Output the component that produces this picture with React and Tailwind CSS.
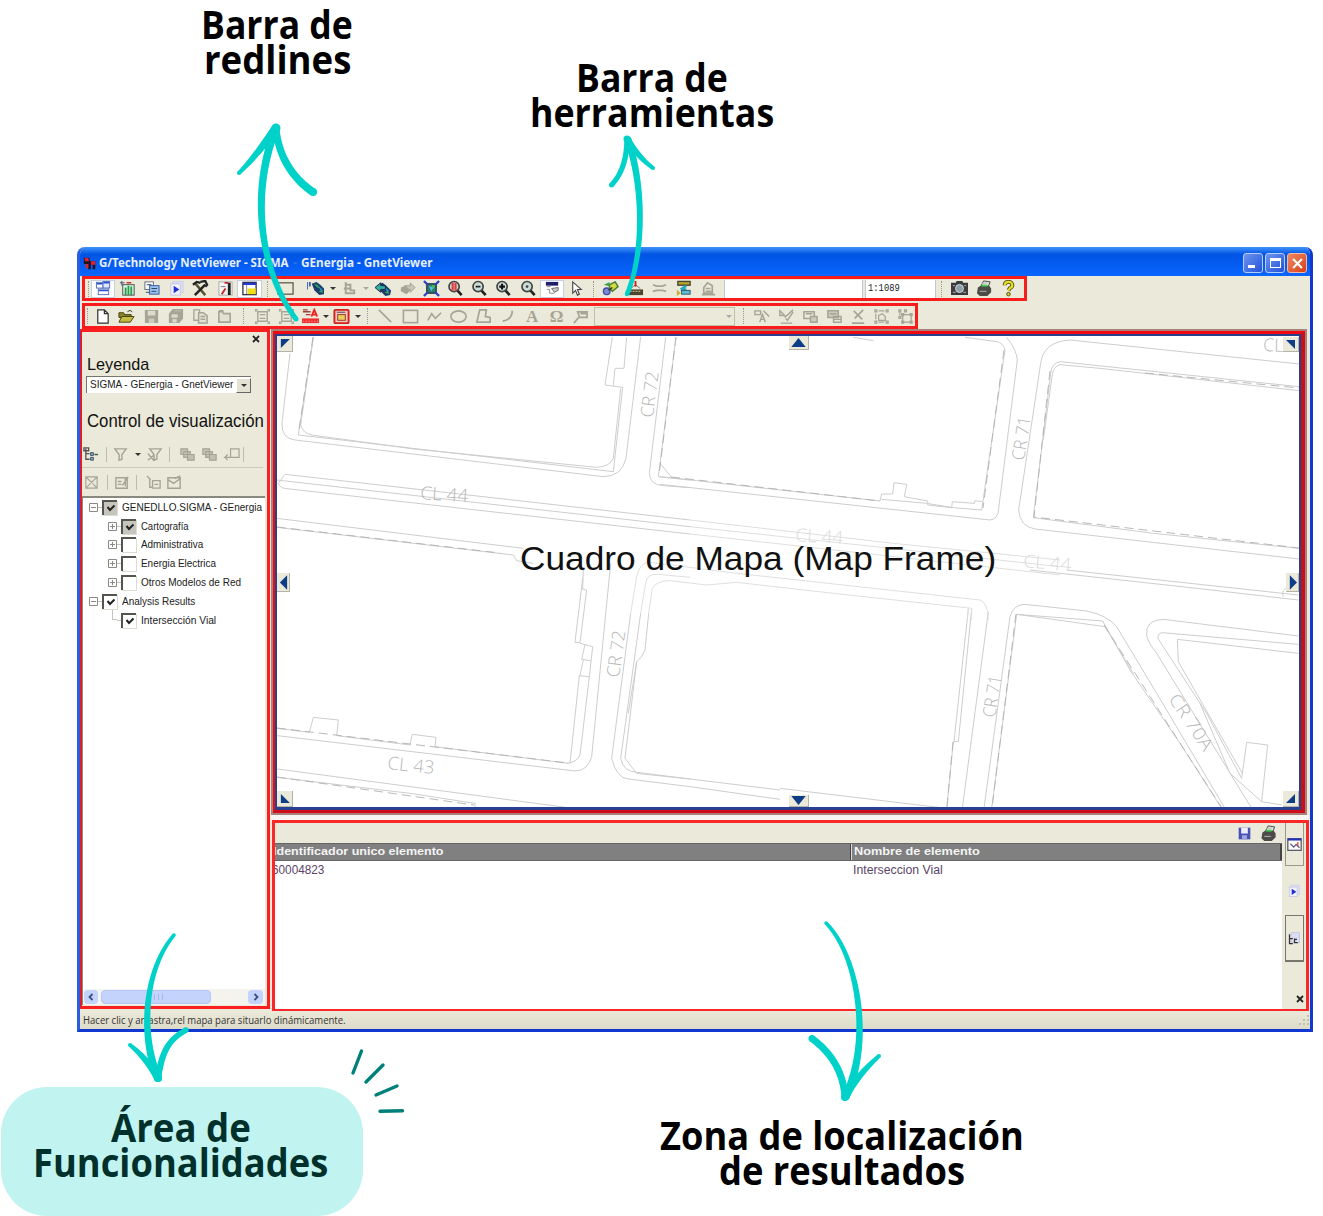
import React, { useLayoutEffect, useRef, useState } from "react";

/* One line of text stretched or condensed to the width of its box. */
function Fit({ className = "", children }) {
  const box = useRef(null);
  const txt = useRef(null);
  const [s, setS] = useState(1);
  useLayoutEffect(() => {
    setS(box.current.clientWidth / txt.current.offsetWidth);
  }, [children]);
  return (
    <div ref={box} className={`shrink-0 whitespace-pre ${className}`}>
      <span ref={txt} className="inline-block origin-left" style={{ transform: `scaleX(${s})` }}>
        {children}
      </span>
    </div>
  );
}

const G = "#a5a495";
const K = "#333";

const globe = (
  <>
    <path d="M1 4l5-2 4 3 5 5-1 5-5 1-5-5z" fill="#1d3c6e" />
    <path d="M3 4l4 1 3 4-3-1z" fill="#2fae57" />
    <path d="M8 6l5 5-2 1z" fill="#2a9ad6" />
    <path d="M8 12l4-1 1 3z" fill="#3aa650" />
  </>
);
const lens = (mark) => (
  <>
    <path d="M11 11l4.5 5" stroke="#222" strokeWidth="2.8" />
    <circle cx="7.5" cy="7" r="5.4" fill="#c9dcd6" stroke="#444" strokeWidth="1.8" />
    {mark}
  </>
);
const printer = (
  <>
    <path d="M5 7l3-6 7 1-2 5z" fill="#dfe6dc" stroke="#444" />
    <path d="M2 8l3-2h9l2 3v4l-4 4H4l-3-3z" fill="#4b4c48" />
    <path d="M4 12h7M6 3.5h6" stroke="#bbb" />
    <path d="M6 6h6" stroke="#38d048" strokeWidth="2" />
  </>
);

const ICONS = {
  windows: <><rect x="1.5" y="2.5" width="7" height="6" fill="#fff" stroke="#5572b8" /><rect x="8.5" y="1.5" width="7" height="7" fill="#dfe8ff" stroke="#4a66c0" /><rect x="3.5" y="9.5" width="11" height="6" fill="#fff" stroke="#5572b8" /><path d="M9 3h6M4 11h10M2 4h6" stroke="#2c50d0" strokeWidth="1.6" /></>,
  grid: <><rect x="4" y="5" width="12" height="11" fill="#dfe" stroke="#444" /><path d="M7 8v8M10 6v10M13 7v9" stroke="#2e9a48" strokeWidth="2" /><path d="M1 3h5M3 1v5" stroke="#447" /><path d="M8 3h5" stroke="#d03030" strokeWidth="1.6" /></>,
  copyview: <><rect x="2" y="2" width="9" height="8" fill="#fff" stroke="#667" /><rect x="7" y="6" width="10" height="9" fill="#9cc0ec" stroke="#3458a8" /><path d="M9 9h6M4 5h5M3 13h4M9 12h5" stroke="#246" /></>,
  page: <><rect x="5" y="1.5" width="11" height="12" fill="#dedef2" stroke="#cfcfe6" /><rect x="3" y="4" width="10" height="12" fill="#f2f2ff" stroke="#c4c4e4" /><path d="M6 6l6 4-6 4z" fill="#1f2fd0" /></>,
  hammer: <><path d="M3 3l11 13" stroke="#5a5036" strokeWidth="2.6" /><path d="M14 5L3 16" stroke="#222" strokeWidth="2.6" /><path d="M1 5l4-3 4 1M9 2l5-1 2 4-2 2" fill="none" stroke="#222" strokeWidth="2.4" /></>,
  chart: <><rect x="2" y="2" width="14" height="14" fill="#f4f4f0" stroke="#aaa" /><path d="M13 3v13" stroke="#222" strokeWidth="3" /><path d="M5 15l4-6M8 3h4" stroke="#c02828" strokeWidth="2" /><path d="M4 7h5" stroke="#777" /></>,
  panel: <><rect x="2" y="2.5" width="14" height="13" fill="#fff" stroke="#334" strokeWidth="1.4" /><path d="M2 4h14" stroke="#2438d0" strokeWidth="2.4" /><rect x="7" y="9" width="8.500" height="6" fill="#f0e010" /><path d="M6 5v10" stroke="#889" /></>,
  rect: <rect x="1" y="3" width="16" height="12" fill="none" stroke="#55564c" strokeWidth="1.3" />,
  layersGlobe: <><path d="M0 2v8M3 2v5" stroke="#4668b0" strokeWidth="2" /><g transform="translate(4 0)">{globe}</g></>,
  tool1: <><path d="M5 2v12h9M5 5h5v6h4v4M3 9h7" fill="none" stroke={G} strokeWidth="2" /></>,
  back: <><g transform="translate(2 1)">{globe}</g><path d="M0 8l6-5v3h5v4H6v3z" fill="#2fb0a0" stroke="#224" /></>,
  fwd: <><path d="M17 8l-5-5v3H6v4h6v3z" fill="#c6c5b6" stroke={G} /><path d="M2 8l5-2 5 5-4 4-6-3z" fill={G} /></>,
  extent: <><rect x="4" y="4" width="10" height="10" fill="#2a7a6a" stroke="#113" /><path d="M6 6l5 2-2 4z" fill="#53c0f0" /><path d="M9 5l4 1-2 4z" fill="#4cc050" /><path d="M1 1l4 4M17 1l-4 4M1 17l4-4M17 17l-4-4" stroke="#2e40c0" strokeWidth="2.4" /></>,
  zRed: lens(<><path d="M6 3v8M9 3v8" stroke="#e04040" strokeWidth="2.4" /></>),
  zOut: lens(<path d="M5 7h5" stroke="#222" strokeWidth="1.8" />),
  zIn: lens(<path d="M4.500 7h6M7.500 4v6" stroke="#111" strokeWidth="2.200" />),
  zDot: lens(<circle cx="7.500" cy="7" r="1.400" fill="#444" />),
  hand: <><path d="M2 2h13v4H2z" fill="#20206a" /><path d="M3 7h4M3 10h3v4h5" stroke="#888" fill="none" /><path d="M8 9l7-1v3l-4 2z" fill="#ccc" stroke="#666" /></>,
  cursor: <path d="M5 2v12l3-3 2 5 2-1-2-5h4z" fill="#fff" stroke="#444" strokeWidth="1.200" />,
  link: <><circle cx="5" cy="12" r="3.500" fill="#7a8ad8" stroke="#3c4ca8" strokeWidth="1.400" /><path d="M8 5l6-3 3 5-6 5-3-3z" fill="#d8d840" stroke="#447a30" strokeWidth="1.500" /><path d="M2 5l6-3v5z" fill="#44a050" /><path d="M7 11l4-3" stroke="#333" strokeWidth="1.500" /></>,
  survey: <><rect x="1" y="10" width="16" height="6" fill="#4a4430" /><path d="M3 12h12" stroke="#d8d090" strokeDasharray="2 1" /><path d="M4 9l5-4 5 4" stroke="#776" fill="none" /><path d="M9 1v6" stroke="#d02020" strokeWidth="2" /></>,
  approx: <path d="M2 5l4 1.500h6L16 5M2 12l4-1h6l4 1" fill="none" stroke={G} strokeWidth="1.900" />,
  flow: <><rect x="3" y="1.500" width="13" height="4" fill="#b8a428" stroke="#443" strokeWidth="1.400" /><path d="M12 6L6 10M6 10h6" stroke="#20a8c0" strokeWidth="2.600" /><rect x="7" y="11" width="9" height="4" fill="#5ac0d8" stroke="#356" /><path d="M2 10l4 4-4 3z" fill="#c8b030" /></>,
  stamp: <><path d="M4 14V8l4-5 5 3v8z" fill="none" stroke={G} strokeWidth="1.800" /><path d="M2 15.500h14M6 9h5M6 12h6" stroke={G} strokeWidth="1.800" /></>,
  camera: <><path d="M0 3h5l1-2h6l1 2h5v13H0z" fill="#3b3b40" /><circle cx="9" cy="9" r="4.200" fill="#8ea0a8" stroke="#ddd" /><path d="M2 6h2M14 6h2M2 13h3M13 13h3" stroke="#bbb" /></>,
  printer,
  help: <><path d="M5 5.500a4 3.500 0 1 1 5.500 3.200L9 11" fill="none" stroke="#55501a" strokeWidth="4.200" /><path d="M5 5.500a4 3.500 0 1 1 5.500 3.200L9 11" fill="none" stroke="#e8e020" strokeWidth="2.200" /><circle cx="9" cy="15" r="1.900" fill="#d0c820" stroke="#55501a" /></>,
  doc: <path d="M4 2h7l4 4v10H4zM11 2v4h4" fill="#fff" stroke={K} strokeWidth="1.300" />,
  open: <><path d="M1 5h5l1 2h7v3H1z" fill="#8a8420" stroke="#444010" /><path d="M1 15l3-6h13l-4 6z" fill="#c4bc40" stroke="#444010" /><path d="M10 4q3-3 5 0" fill="none" stroke={K} /></>,
  save: <><path d="M2 2h14v14H2z" fill={G} /><path d="M5 3h8v5H5z" fill="#dddccc" /><path d="M6 11h6v5H6z" fill="#cccbbb" /></>,
  saveall: <><path d="M6 1h11v10l-4 5H2V6z" fill={G} /><path d="M5 7h6v3H5zM6 12h4v3H6zM8 3h7" fill="#dddccc" stroke="#dddccc" strokeWidth=".5" /></>,
  copy: <><path d="M2 2h6v11H2z" fill="none" stroke={G} strokeWidth="1.400" /><path d="M7 5h5l4 3v8H7zM9 9h5M9 12h5" fill="#e3e2d2" stroke={G} strokeWidth="1.600" /></>,
  folder: <path d="M3 4h4l1 2h7v9H3zM4 4V3h4" fill="#e3e2d2" stroke={G} strokeWidth="1.700" />,
  group: <><path d="M4 4h10v10H4zM1 2h3M14 2h3M1 16h3M14 16h3M2 1v3M16 1v3M2 14v3M16 14v3M6 7h6M6 11h6" fill="none" stroke={G} strokeWidth="1.500" /></>,
  redtext: <><path d="M1 4h8M1 2h5M4 7h5" stroke="#a04040" strokeWidth="1.500" /><path d="M10 9l3-7 3 7M11 7h4" fill="none" stroke="#f02020" strokeWidth="2" /><path d="M0 13.500h18" stroke="#f03030" strokeWidth="5" /><path d="M1 14h16" stroke="#fbb" strokeDasharray="1 2" /></>,
  redbox: <><rect x="1.500" y="2" width="15" height="14" rx="1" fill="#f4c8b8" stroke="#d02020" strokeWidth="2" /><rect x="5" y="7" width="8" height="6" fill="#e8d060" stroke="#a03020" /><path d="M4 4.500h9" stroke="#446" /></>,
  line: <path d="M2 2l13 13" stroke={G} strokeWidth="1.700" />,
  square: <rect x="1.500" y="2.500" width="15" height="13" fill="none" stroke={G} strokeWidth="1.700" />,
  zig: <path d="M2 13l4-7 4 5 6-6" fill="none" stroke={G} strokeWidth="1.700" />,
  ellipse: <ellipse cx="9" cy="9" rx="8.100" ry="6" fill="none" stroke={G} strokeWidth="1.700" />,
  poly: <path d="M5 2h7l-1 7 5 1v5H2z" fill="none" stroke={G} strokeWidth="1.800" />,
  arc: <path d="M14 3q0 9-10 11" fill="none" stroke={G} strokeWidth="1.900" />,
  callout: <path d="M2 16l5-6M6 4h10v6H8z M9 6h6" fill="none" stroke={G} strokeWidth="1.800" />,
  mA: <path d="M1 3h6v4H1zM6 15l3-8 3 8M7 12h4M10 3l6 6" fill="none" stroke={G} strokeWidth="1.500" />,
  mEdit: <path d="M2 3l5 5H2zM7 10l9-8M3 16h12M8 11l2 2 6-9" fill="none" stroke={G} strokeWidth="1.500" />,
  mBack: <><path d="M2 4h11v7H2z M4 6h7" fill="none" stroke={G} strokeWidth="1.600" /><path d="M9 9h7v6H9z" fill="#cccbbb" stroke={G} strokeWidth="1.500" /></>,
  mFront: <><path d="M2 3h11v7H2z M4 6h7" fill="#cccbbb" stroke={G} strokeWidth="1.600" /><path d="M8 9h8v6H8zM8 12h8" fill="none" stroke={G} strokeWidth="1.500" /></>,
  mDel: <path d="M4 3l9 9M14 2L5 11M2 16h13" fill="none" stroke={G} strokeWidth="1.700" />,
  mSel: <path d="M2 2h2v2H2zM14 2h2v2h-2zM2 14h2v2H2zM14 14h2v2h-2zM6 3h6M6 15h6M3 6v6M6 8l4-2 3 3v4H6z" fill="none" stroke={G} strokeWidth="1.300" />,
  mSel2: <path d="M2 2h2v2H2zM8 2h2v2H8zM2 9h2v2H2zM6 7h9v8H6zM5 6h2v2H5zM14 6h2v2h-2zM14 14h2v2h-2zM5 14h2v2H5zM3 5v3" fill="none" stroke={G} strokeWidth="1.300" />,
  tree: <><path d="M3 3v11h4M3 8h4M1 2h5v3H1z" fill="none" stroke="#555" strokeWidth="1.400" /><path d="M8 7h3v3H8zM8 12h3v3H8z" fill="#7aa8d0" stroke="#456" /><path d="M12 9h4" stroke="#464" strokeWidth="1.500" /></>,
  filter: <path d="M3 3h12l-4.500 6v5l-3 1V9z" fill="none" stroke={G} strokeWidth="1.500" />,
  filterX: <path d="M4 3h12l-4.500 6v5l-3 1V9zM2 8l6 7M9 9l-7 6" fill="none" stroke={G} strokeWidth="1.500" />,
  stack: <><path d="M2 3h7v6H2zM5 6h7v6H5z" fill="#c6c5b5" stroke={G} strokeWidth="1.300" /><path d="M9 9h7v6H9z" fill="#c0bfb0" stroke={G} strokeWidth="1.300" /></>,
  undo: <path d="M8 3h9v9H8zM10 12H2l3-3M2 12l3 3" fill="none" stroke={G} strokeWidth="1.300" />,
  boxX: <path d="M3 3h12v12H3zM3 3l6 6 6-6M3 15l5-5M15 15l-5-5" fill="none" stroke={G} strokeWidth="1.200" />,
  props: <path d="M2 4h12v11H2zM4 8h4M4 11h4M9 12l6-9M12 4v9" fill="none" stroke={G} strokeWidth="1.500" />,
  legend: <path d="M2 2l4 4M5 5v9h3M8 7h8v8H8zM10 11h4" fill="none" stroke={G} strokeWidth="1.400" />,
  env: <path d="M2 4h13v11H2zM2 6l6 4 7-5M9 5l6-3" fill="none" stroke={G} strokeWidth="1.500" />,
  disk: <><path d="M2 2h14v14H2z" fill="#4653b4" /><path d="M5 2h8v7H5z" fill="#eef" /><path d="M6 11h6v5H6z" fill="#9ba4dc" /></>,
  picture: <><rect x="1" y="2" width="16" height="14" fill="#fff" stroke="#556" strokeWidth="1.500" /><path d="M1 3h16" stroke="#2030c0" strokeWidth="2.500" /><path d="M4 8l4 4 3-3 4 4" fill="none" stroke="#668" strokeWidth="1.600" /><path d="M13 6v5" stroke="#e04040" strokeWidth="1.500" /></>,
  rpage: <><rect x="5" y="2" width="10" height="12" fill="#dcdcf4" stroke="#c4c4e4" /><path d="M3 4v11h4M3 9h4M9 9v5h4M9 10h3" fill="none" stroke="#333" strokeWidth="1.500" /></>,
};

function Icon({ name, className = "h-[18px] w-[18px]" }) {
  return (
    <svg viewBox="0 0 18 18" className={`shrink-0 ${className}`}>
      {ICONS[name]}
    </svg>
  );
}

const Slot = ({ name, on, w = "w-[24.4px]" }) => (
  <div className={`flex h-[18px] shrink-0 items-center justify-center ${w} ${on ? "bg-white outline outline-[#c5cfe0] -outline-offset-1" : ""}`}>
    {name === "A" || name === "Ω" ? (
      <span className="font-['Liberation_Serif',serif] text-[17px] leading-none font-bold text-[#a5a495]">{name}</span>
    ) : (
      <Icon name={name} className="h-[17px] w-[17px]" />
    )}
  </div>
);
const Slots = ({ names, on = [], w }) => names.map((n, i) => <Slot key={i} name={n} on={on.includes(n)} w={w} />);

const Grip = ({ w }) => (
  <div className={`flex shrink-0 justify-center ${w}`}>
    <div className="h-[16px] w-0 border-l border-dotted border-[#99988a]" />
  </div>
);
const Drop = ({ w, c = "border-t-[#333]" }) => (
  <div className={`flex shrink-0 justify-center ${w}`}>
    <div className={`h-0 w-0 border-x-[3px] border-t-[3px] border-x-transparent ${c}`} />
  </div>
);
const Sep = ({ w }) => (
  <div className={`flex shrink-0 justify-center ${w}`}>
    <div className="h-[15px] w-px bg-[#bdbcae]" />
  </div>
);

function Callout({ className = "", lines }) {
  return (
    <div className={`flex flex-col items-center font-['Open_Sans',sans-serif] text-[40px] leading-[35px] font-bold ${className}`}>
      {lines.map(([t, w]) => (
        <Fit key={t} className={w}>{t}</Fit>
      ))}
    </div>
  );
}

const Check = ({ state }) => (
  <div className={`flex h-[15px] w-[15px] shrink-0 items-center justify-center border-t-2 border-l-2 border-[#55554d] ${state === "gray" ? "bg-[#c6c5bd]" : "bg-white"} shadow-[1px_1px_0_#dddcd0]`}>
    {state !== "off" && (
      <svg viewBox="0 0 10 10" className="h-[10px] w-[10px]"><path d="M1.500 4l2.500 3L8.500 2.500" fill="none" stroke="#222" strokeWidth="2" /></svg>
    )}
  </div>
);
const Expander = ({ plus }) => (
  <svg viewBox="0 0 9 9" className="h-[9px] w-[9px] shrink-0">
    <path d={plus ? "M.5.500h8v8h-8zM2 4.500h5M4.500 2v5" : "M.5.500h8v8h-8zM2 4.500h5"} fill="#fff" stroke="#8a8a84" />
  </svg>
);

const TREE = [
  ["GENEDLLO.SIGMA - GEnergia", "w-[140px]", 0, "gray", "minus"],
  ["Cartografía", "w-[48px]", 1, "gray", "plus"],
  ["Administrativa", "w-[62px]", 1, "off", "plus"],
  ["Energia Electrica", "w-[75px]", 1, "off", "plus"],
  ["Otros Modelos de Red", "w-[100px]", 1, "off", "plus"],
  ["Analysis Results", "w-[73px]", 0, "on", "minus"],
  ["Intersección Vial", "w-[75px]", 1, "on", "line"],
];

function LeftPanel() {
  return (
    <div className="flex h-[680px] w-[191px] shrink-0 flex-col overflow-hidden border-[3px] border-[#fa2020] border-l-[#e01c28] bg-[#ebe9d9] font-['Liberation_Sans',sans-serif] text-[#222]">
      <div className="flex h-[15px] justify-end pt-[3px] pr-[7px]">
        <svg viewBox="0 0 8 8" className="h-[8px] w-[8px]"><path d="M1 1l6 6M7 1L1 7" stroke="#222" strokeWidth="1.800" /></svg>
      </div>
      <Fit className="mt-[8px] ml-[5px] w-[62px] text-[17px] leading-[20px] text-[#111]">Leyenda</Fit>
      <div className="mt-[1px] ml-[4px] flex h-[17px] w-[165px] items-center border-t border-l border-[#77766c] bg-white pl-[3px] text-[11.500px]">
        <Fit className="w-[143px]">SIGMA - GEnergia - GnetViewer</Fit>
        <div className="ml-auto flex h-[15px] w-[15px] items-center justify-center border border-t-[#fff] border-r-[#666] border-b-[#666] border-l-[#fff] bg-[#e4e2d2]">
          <Drop w="w-[8px]" />
        </div>
      </div>
      <Fit className="mt-[18px] ml-[5px] w-[177px] text-[17.500px] leading-[20px] text-[#111]">Control de visualización</Fit>
      <div className="mt-[12px] flex h-[22px] items-center pl-[1px]">
        <Slot name="tree" w="w-[17px]" /><Sep w="w-[12px]" /><Slot name="filter" w="w-[17px]" />
        <Drop w="w-[17px]" /><Slot name="filterX" w="w-[17px]" /><Sep w="w-[13px]" />
        <Slots names={["stack", "stack", "undo"]} w="w-[22px]" /><Sep w="w-[3px]" />
      </div>
      <div className="mt-[2px] h-px w-[181px] bg-[#cbcabc]" />
      <div className="mt-[3px] flex h-[22px] items-center pl-[1px]">
        <Slot name="boxX" w="w-[17px]" /><Sep w="w-[14px]" /><Slot name="props" w="w-[16px]" /><Sep w="w-[13px]" />
        <Slots names={["legend", "env"]} w="w-[21px]" />
      </div>
      <div className="mt-[3px] mb-[1px] flex w-[183px] grow flex-col border-t-2 border-l border-[#8a897e] bg-white">
        <div className="flex flex-col text-[11.500px]">
          {TREE.map(([t, w, depth, state, exp]) => (
            <div key={t} className={`flex h-[18.8px] items-center ${depth ? "pl-[25px]" : "pl-[6px]"}`}>
              {exp === "line" ? <div className="-mt-[10px] ml-[4px] h-[10px] w-[5px] border-b border-l border-[#c4c4c0]" /> : <Expander plus={exp === "plus"} />}
              <div className="h-px w-[4px] bg-[#c4c4c0]" />
              <Check state={state} />
              <Fit className={`ml-[5px] ${w}`}>{t}</Fit>
            </div>
          ))}
        </div>
        <div className="mt-auto flex h-[16px] items-center bg-[#f4f3ee] pl-px">
          <div className="flex h-[14px] w-[14px] items-center justify-center rounded-sm bg-[#c3d3fb]">
            <svg viewBox="0 0 8 8" className="h-2 w-2"><path d="M5.500 1L2.500 4l3 3" fill="none" stroke="#3c5080" strokeWidth="1.800" /></svg>
          </div>
          <div className="ml-[3px] flex h-[14px] w-[110px] items-center justify-center gap-[3px] rounded-sm border border-[#b4c7f4] bg-[#c3d3fb]">
            <div className="h-[6px] w-px bg-[#a3bbea]" /><div className="h-[6px] w-px bg-[#a3bbea]" /><div className="h-[6px] w-px bg-[#a3bbea]" /><div className="h-[6px] w-px bg-[#a3bbea]" />
          </div>
          <div className="mr-[2px] ml-auto flex h-[14px] w-[15px] items-center justify-center rounded-sm bg-[#c3d3fb]">
            <svg viewBox="0 0 8 8" className="h-2 w-2"><path d="M2.500 1l3 3-3 3" fill="none" stroke="#3c5080" strokeWidth="1.800" /></svg>
          </div>
        </div>
      </div>
    </div>
  );
}

const NavBtn = ({ className, d }) => (
  <div className={`absolute flex items-center justify-center border-r border-b border-[#b5b4a8] bg-[#ebe9d9] ${className}`}>
    <svg viewBox="0 0 14 10" className="h-[9px] w-[13px] shrink-0 overflow-visible"><path d={d} fill="#0d3d86" /></svg>
  </div>
);

const STREETS = [
  ["translate(270 330) scale(.33333)", [
    "M60 70L36 280Q34 325 75 330L1000 440Q1055 440 1068 385L1112 20",
    "M130 22L85 315L1030 425L1058 172L1005 165L1027 22",
    "M130 22L92 285Q100 310 125 315L440 358L980 412Q1020 410 1030 385L1052 175",
    "M1030 167L1035 115L1062 115L1070 22",
    "M1187 22L1138 430Q1140 465 1180 467L1260 473",
    "M1218 22L1165 440L1260 450M1170 400L1205 442",
    "M1260 570L45 433L25 460Q30 475 50 476L1260 612M20 450L1260 590",
    "M20 565L760 655M20 592L730 675L740 692L790 700",
    "M940 715L938 778L950 780L930 938L915 937L938 745",
    "M1022 700L965 1280Q955 1322 915 1323L22 1217",
  ]],
  ["translate(660 330) scale(.33333)", [
    "M0 440L660 513L665 492L698 492L702 458L740 463L733 500L803 513L803 525L875 533L877 515L943 520L945 512L968 515",
    "M665 508L800 520L880 533L965 540L1035 60Q1030 38 1010 35L915 22",
    "M0 463L990 570Q1015 568 1016 535L1072 90Q1070 60 1040 22M580 22L640 32",
  ]],
  ["translate(270 580) scale(.33333)", [
    "M930 190L968 200L958 290L928 287L900 550M945 193L935 238L962 242M958 290L930 525Q920 548 890 550M940 240L930 287",
    "M22 445L118 457L130 412L205 420L200 467L420 495L427 463L498 472L495 500L895 550",
    "M22 567L895 683M22 592L420 640L615 670L615 685",
    "M1082 100L1025 535Q1040 595 1075 597L1260 620L1530 658",
    "M1112 100L1052 535Q1060 575 1100 577L1260 597L1530 630",
    "M1136 100L1125 210Q1115 235 1100 245L1065 535L1100 580L1260 597M1100 245L1075 400",
  ]],
  ["translate(900 570) scale(.33333)", [
    "M265 125L187 715",
    "M215 117L175 515L160 515L140 715L-360 655M205 117L162 515",
    "M252 715L330 140Q340 103 375 103L560 123Q620 135 650 170L770 370L975 715",
    "M275 715L350 133L608 153L690 300L840 520L965 715M350 133L615 170L700 310",
    "M1195 90L890 55L390 0M1195 75L500 0M1170 50Q1140 60 1150 80",
    "M1195 198L790 148Q735 150 740 195Q742 215 770 250L960 560L1055 715",
    "M1195 223L785 188Q765 195 780 215L920 430L1025 625L1040 517L1103 525L1085 695",
    "M1195 250L832 208L835 275L1027 610M900 400L990 610L1085 695L1145 705",
  ]],
  ["translate(1020 240) scale(.33333)", [
    "M837 372L150 300Q70 305 62 370L-4 810Q0 860 45 867L160 880L837 957",
    "M837 440L120 365Q95 370 92 400L40 833L400 880L837 925",
    "M837 452L240 385L120 374Q100 378 96 410L70 600",
  ]],
];
const FAINT = [
  "M90 570L700 640L1200 690M90 590L1200 710M90 612L1200 735",
  "M-88 850L-70 740Q-60 695 -30 697L230 730L960 810Q985 820 985 870",
  "M-58 850L-43 760Q-40 730 -5 733L90 742",
  "M-34 850L-23 775Q-10 752 30 752L140 765L230 757L520 790L935 835L935 870M925 835L922 870",
];
const NAMES = [
  ["CR 72", 653, 418, -83, 46], ["CL 44", 420, 499, 4, 48], ["CL 44", 795, 541, 4, 48], ["CR 71", 1024, 461, -81, 44],
  ["CR 72", 619, 678, -82, 47], ["CL 43", 387, 769, 6, 47], ["CR 71", 995, 718, -81, 42], ["CR 70A", 1168, 699, 56, 64],
  ["CL 44", 1023, 567, 5, 48], ["CL", 1263, 351, 2, 20],
];

function MapFrame() {
  return (
    <div className="h-[486px] w-[1036px] shrink-0 border-2 border-[#a8807c]">
      <div className="h-full border-[3px] border-r-[4px] border-l-[2px] border-[#f00a10] border-r-[#c81018] border-b-[#d00c18]">
        <div className="relative h-full overflow-hidden border-[2px] border-b-[3px] border-[#27408f] bg-white">
          <svg viewBox="277 336 1022 471" preserveAspectRatio="none" className="h-full w-full">
            {STREETS.map(([t, ds], i) => (
              <g key={i} transform={t} fill="none" stroke="#cbcbcb" strokeWidth="2.900">
                {ds.map((d) => <path key={d} d={d} />)}
              </g>
            ))}
            <g transform="translate(660 330) scale(.33333)" fill="none" stroke="#dedede" strokeWidth="2.900">
              {FAINT.map((d) => <path key={d} d={d} />)}
            </g>
            <g fill="none" stroke="#b0b0b0" strokeWidth=".9" strokeDasharray="9 5">
              <path d="M313 337L299 430M676 337L659 475M671 477L880 501M1004 350L983 508M1050 371L1034 517L1299 548M1145 373L1299 388M1016 614L992 808M277 728L568 763M277 777L474 805M1104 625L1180 743L1222 808M277 527L500 553M953 742L947 808" />
            </g>
            <g fontFamily="Open Sans, sans-serif" fontWeight="300" fontSize="18" fill="#b8b8b8">
              {NAMES.map(([n, x, y, r, w], i) => (
                <text key={i} transform={`translate(${x} ${y}) rotate(${r})`} textLength={w} lengthAdjust="spacingAndGlyphs" fill={i === 2 || i === 8 ? "#dcdcdc" : "#b8b8b8"}>{n}</text>
              ))}
            </g>
          </svg>
          <Fit className="absolute top-[204px] left-[243px] w-[476px] font-['Liberation_Sans',sans-serif] text-[34px] leading-[36px] text-[#111]">Cuadro de Mapa (Map Frame)</Fit>
          <NavBtn className="top-0 left-0 h-[16px] w-[16px]" d="M3 0h10L3 10z" />
          <NavBtn className="top-0 left-[512px] h-[14px] w-[20px]" d="M7 0l8 10H-1z" />
          <NavBtn className="top-px right-0 h-[15px] w-[16px]" d="M2 0h10v10z" />
          <NavBtn className="top-[237px] left-0 h-[19px] w-[13px]" d="M11 -3v16L3 5z" />
          <NavBtn className="top-[237px] right-0 h-[19px] w-[13px]" d="M4 -3v16l8-8z" />
          <NavBtn className="bottom-0 left-0 h-[16px] w-[16px]" d="M3 0v10h10z" />
          <NavBtn className="bottom-0 left-[512px] h-[12px] w-[20px]" d="M-1 0h16L7 10z" />
          <NavBtn className="right-0 bottom-0 h-[16px] w-[16px]" d="M12 0v10H2z" />
        </div>
      </div>
    </div>
  );
}

function Results() {
  return (
    <div className="ml-px flex h-[192px] w-[1037px] shrink-0 overflow-hidden border-[3px] border-[#fa2828] bg-white font-['Liberation_Sans',sans-serif]">
      <div className="flex w-[1007px] shrink-0 flex-col">
        <div className="flex h-[20px] shrink-0 items-center justify-end gap-[8px] bg-[#ebe9d9] pr-[4px]">
          <Icon name="disk" className="h-[15px] w-[15px]" />
          <Icon name="printer" className="h-[17px] w-[18px]" />
        </div>
        <div className="flex h-[18px] shrink-0 items-center border-y border-[#666] bg-[#808080] text-[11.500px] font-bold text-[#f4f4f4]">
          <div className="flex h-full w-[576px] items-center border-r border-[#444]">
            <Fit className="-ml-[2px] w-[171px]">Identificador unico elemento</Fit>
          </div>
          <div className="flex h-full grow items-center border-r-2 border-l border-r-[#444] border-l-[#ddd] pl-[2px]">
            <Fit className="w-[126px]">Nombre de elemento</Fit>
          </div>
        </div>
        <div className="flex h-[18px] items-center text-[12px] text-[#5b4468]">
          <div className="w-[576px]"><Fit className="-ml-[3px] w-[52px]">60004823</Fit></div>
          <Fit className="ml-[2px] w-[90px]">Interseccion Vial</Fit>
        </div>
      </div>
      <div className="flex grow flex-col items-center bg-[#ebe9d9]">
        <div className="flex h-[43px] w-[19px] items-center justify-center border border-t-0 border-[#999889]"><Icon name="picture" className="h-[15px] w-[15px]" /></div>
        <div className="flex h-[49px] items-center"><Icon name="page" className="h-[14px] w-[14px]" /></div>
        <div className="flex h-[47px] w-[19px] items-center justify-center border border-b-2 border-[#77766c]"><Icon name="rpage" className="h-[15px] w-[15px]" /></div>
        <svg viewBox="0 0 8 8" className="mt-[33px] mr-[2px] h-[8px] w-[8px] self-end"><path d="M1 1l6 6M7 1L1 7" stroke="#222" strokeWidth="1.800" /></svg>
      </div>
    </div>
  );
}

function TitleBar() {
  return (
    <div className="flex h-[29px] shrink-0 items-center bg-linear-to-b from-[#3f92fb] via-[#0054e3] via-25% to-[#0a66ff] pt-[3px] pr-[5px] pl-[3px]">
      <svg viewBox="0 0 16 16" className="h-[16px] w-[14px]">
        <path d="M1 2h6l1 4h6v9h-3v-5H9v5H6V9H1z" fill="#1b1220" />
        <path d="M2 2h4l1 4H2zM9 6h5v4H9zM3 9h3v5H3z" fill="#e02030" />
      </svg>
      <div className="ml-[2px] flex font-['Noto_Sans',sans-serif] text-[11.500px] font-bold text-[#e6eefc]">
        <Fit className="w-[190px]">G/Technology NetViewer - SIGMA</Fit>
        <span className="w-[12px] text-center text-[#2f6fe8]">-</span>
        <Fit className="w-[131px]">GEnergia - GnetViewer</Fit>
      </div>
      <div className="mr-[-2px] ml-auto flex gap-[2px]">
        <div className="flex h-[20px] w-[20px] items-end rounded-[3px] border border-[#b8ccf8] bg-linear-to-br from-[#6f95f0] to-[#2450d8] p-[4px]"><div className="h-[3px] w-[7px] bg-white" /></div>
        <div className="flex h-[20px] w-[20px] items-center justify-center rounded-[3px] border border-[#b8ccf8] bg-linear-to-br from-[#6f95f0] to-[#2450d8]"><div className="h-[10px] w-[11px] border border-t-[3px] border-white" /></div>
        <div className="flex h-[20px] w-[20px] items-center justify-center rounded-[3px] border border-[#f0b8a8] bg-linear-to-br from-[#f08860] to-[#d83c10]">
          <svg viewBox="0 0 10 10" className="h-[11px] w-[11px]"><path d="M1 1l8 8M9 1L1 9" stroke="#fff" strokeWidth="1.900" /></svg>
        </div>
      </div>
    </div>
  );
}

function Toolbars() {
  return (
    <div className="flex h-[53px] shrink-0 flex-col items-start gap-[2px] bg-[#ebe9d9] pl-[2px]">
      <div className="flex h-[25px] w-[945px] items-center border-[3px] border-[#f81c1c]">
        <Grip w="w-[6px]" />
        <Slots names={["windows", "grid", "copyview", "page", "hammer", "chart", "panel"]} on={["windows", "panel"]} />
        <Grip w="w-[12px]" />
        <Slot name="rect" /><div className="w-[5px] shrink-0" />
        <Slot name="layersGlobe" /><Drop w="w-[10px]" />
        <Slot name="tool1" /><Drop w="w-[9px]" c="border-t-[#aaa]" />
        <Slots names={["back", "fwd", "extent", "zRed", "zOut", "zIn", "zDot", "hand", "cursor"]} on={["hand"]} w="w-[24.2px]" />
        <Grip w="w-[10px]" />
        <Slots names={["link", "survey", "approx", "flow", "stamp"]} />
        <div className="ml-[3px] h-[18px] w-[139px] shrink-0 border-x border-[#c0c8d4] bg-white" />
        <div className="ml-[2px] flex h-[18px] w-[71px] shrink-0 items-center border-x border-[#c0c8d4] bg-white pl-[2px] font-['Liberation_Mono',monospace] text-[10.500px] text-[#222]">
          <Fit className="w-[32px]">1:1089</Fit>
        </div>
        <Grip w="w-[12px]" />
        <Slots names={["camera", "printer", "help"]} w="w-[24.500px]" />
      </div>
      <div className="flex h-[26px] w-[836px] items-center border-[3px] border-[#f81c1c]">
        <Grip w="w-[5px]" />
        <Slots names={["doc", "open", "save", "saveall", "copy", "folder"]} w="w-[24.500px]" />
        <Grip w="w-[13px]" />
        <Slots names={["group", "group", "redtext"]} /><Drop w="w-[6px]" />
        <Slot name="redbox" /><Drop w="w-[8px]" />
        <Grip w="w-[12px]" />
        <Slots names={["line", "square", "zig", "ellipse", "poly", "arc", "A", "Ω", "callout"]} />
        <div className="ml-px flex h-[19px] w-[141px] shrink-0 items-center justify-end border border-[#c0bfae]"><Drop w="w-[10px]" c="border-t-[#aaa]" /></div>
        <Grip w="w-[16px]" />
        <Slots names={["mA", "mEdit", "mBack", "mFront", "mDel", "mSel", "mSel2"]} w="w-[23.800px]" />
      </div>
    </div>
  );
}

/* Brush stroke: a cubic curve whose width runs from w0 to w1, with round ends. */
function brush([x0, y0, x1, y1, x2, y2, x3, y3, w0, w1]) {
  const left = [];
  const right = [];
  for (let i = 0; i <= 24; i++) {
    const t = i / 24;
    const u = 1 - t;
    const x = u * u * u * x0 + 3 * u * u * t * x1 + 3 * u * t * t * x2 + t * t * t * x3;
    const y = u * u * u * y0 + 3 * u * u * t * y1 + 3 * u * t * t * y2 + t * t * t * y3;
    const dx = u * u * (x1 - x0) + 2 * u * t * (x2 - x1) + t * t * (x3 - x2);
    const dy = u * u * (y1 - y0) + 2 * u * t * (y2 - y1) + t * t * (y3 - y2);
    const r = (w0 + (w1 - w0) * t) / 2 / Math.hypot(dx, dy);
    left.push(`${x - dy * r} ${y + dx * r}`);
    right.unshift(`${x + dy * r} ${y - dx * r}`);
  }
  return `M${left.join("L")}L${right.join("L")}Z`;
}

const BRUSHES = [
  [296, 319, 268, 283, 246, 208, 275, 130, 5, 8],
  [276, 128, 264, 145, 252, 160, 239, 173, 9, 4],
  [276, 128, 278, 155, 292, 178, 313, 192, 7, 8],
  [627, 294, 643, 258, 645, 190, 628, 140, 4.500, 7],
  [627, 139, 627, 160, 621, 175, 611.500, 185, 5.500, 5],
  [627, 139, 634, 150, 642, 160, 653, 168, 7, 4],
  [174, 935, 144, 970, 140, 1035, 158, 1078, 3.600, 8],
  [158, 1078, 150, 1064, 140, 1053, 130, 1045, 8, 4],
  [158, 1078, 162, 1052, 168, 1040, 186, 1030, 6.500, 5.500],
  [826, 923, 858, 955, 872, 1040, 846, 1096, 3.600, 8],
  [845, 1097, 843, 1070, 830, 1052, 812, 1038.500, 7, 7],
  [845, 1097, 856, 1078, 868, 1066, 879, 1056, 8, 4],
];

function Arrows() {
  return (
    <svg viewBox="0 0 1323 1216" className="pointer-events-none absolute inset-0 h-full w-full">
      <g fill="#00d2ca">
        {BRUSHES.map((b, i) => (
          <g key={i}>
            <path d={brush(b)} />
            <circle cx={b[0]} cy={b[1]} r={b[8] / 2} />
            <circle cx={b[6]} cy={b[7]} r={b[9] / 2} />
          </g>
        ))}
      </g>
      <path d="M361.500 1051L353 1073M383 1065L366 1082M397 1086L376 1095M380 1111.300L402.500 1110.700" fill="none" strokeLinecap="round" stroke="#00807a" strokeWidth="3.400" />
    </svg>
  );
}

export default function App() {
  return (
    <div className="relative flex h-[1216px] w-[1323px] flex-col overflow-hidden bg-white">
      <div className="flex h-[247px] shrink-0 items-start pl-[201px] text-black">
        <Callout className="mt-[6px] w-[152px]" lines={[["Barra de", "w-[152px]"], ["redlines", "w-[147px]"]]} />
        <Callout className="mt-[59px] ml-[177px] w-[244px]" lines={[["Barra de", "w-[152px]"], ["herramientas", "w-[244px]"]]} />
      </div>
      <div className="ml-[77px] flex h-[785px] w-[1236px] shrink-0 flex-col overflow-hidden rounded-t-[8px] border-[3px] border-t-0 border-[#1038d0] border-l-[#2a5ce0] bg-[#ebe9d9]">
        <TitleBar />
        <Toolbars />
        <div className="-ml-px flex h-[682px] shrink-0 gap-px">
          <LeftPanel />
          <div className="flex flex-col">
            <MapFrame />
            <div className="h-[5px] shrink-0 bg-[#f8f6f2]" />
            <Results />
          </div>
        </div>
        <div className="flex grow items-center justify-between bg-linear-to-b from-[#ebe9d9] to-[#dddbc8] pl-[3px] font-['Open_Sans',sans-serif] text-[10px] leading-[12px] text-[#333]">
          <Fit className="w-[263px]">Hacer clic y arrastra,rel mapa para situarlo dinámicamente.</Fit>
          <svg viewBox="0 0 12 12" className="h-[12px] w-[12px]"><path d="M9 1h2v2H9zM9 5h2v2H9zM9 9h2v2H9zM5 5h2v2H5zM5 9h2v2H5zM1 9h2v2H1z" fill="#c2c0ae" /></svg>
        </div>
      </div>
      <div className="flex grow items-start pt-[55px]">
        <div className="ml-[1px] flex h-[129px] w-[362px] flex-col items-center rounded-[46px] bg-[#c1f4f0] text-[#00302c]">
          <Callout className="mt-[22px] -ml-[3px]" lines={[["Área de", "w-[140px]"], ["Funcionalidades", "w-[295px]"]]} />
        </div>
        <Callout className="mt-[30px] ml-[297px] text-black" lines={[["Zona de localización", "w-[364px]"], ["de resultados", "w-[246px]"]]} />
      </div>
      <Arrows />
    </div>
  );
}
